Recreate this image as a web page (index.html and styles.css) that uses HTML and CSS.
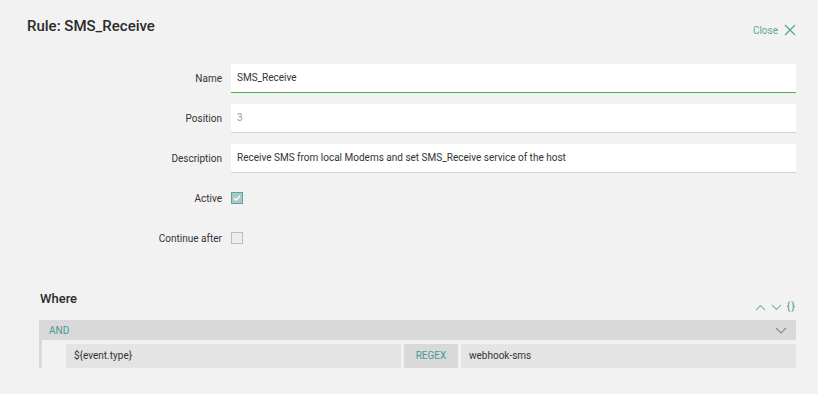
FILE: index.html
```html
<!DOCTYPE html>
<html lang="en">
<head>
  <meta charset="UTF-8" />
  <title>Rule: SMS_Receive</title>
  <link rel="stylesheet" href="styles.css">
</head>
<body>
  <main class="panel">
    <header class="panel-head">
      <h1>Rule: SMS_Receive</h1>
      <a class="close-link" href="#">Close
        <svg width="12" height="12" viewBox="0 0 12 12"><path d="M1 1 L11 11 M11 1 L1 11" stroke="currentColor" stroke-width="1.3" fill="none"/></svg>
      </a>
    </header>

    <section class="form">
      <div class="row">
        <label>Name</label>
        <div class="field active-field">SMS_Receive</div>
      </div>
      <div class="row">
        <label>Position</label>
        <div class="field muted">3</div>
      </div>
      <div class="row">
        <label>Description</label>
        <div class="field">Receive SMS from local Modems and set SMS_Receive service of the host</div>
      </div>
      <div class="row">
        <label>Active</label>
        <span class="check checked">
          <svg width="8" height="6" viewBox="0 0 8 6"><path d="M1 3.2 L3 5 L7 1" stroke="#fff" stroke-width="1.4" fill="none"/></svg>
        </span>
      </div>
      <div class="row">
        <label>Continue after</label>
        <span class="check"></span>
      </div>
    </section>

    <section class="where">
      <div class="where-head">
        <h2>Where</h2>
        <div class="tools">
          <svg width="11" height="7" viewBox="0 0 11 7"><path d="M1 6 L5.5 1.5 L10 6" stroke="currentColor" stroke-width="1.1" fill="none"/></svg>
          <svg width="11" height="7" viewBox="0 0 11 7"><path d="M1 1 L5.5 5.5 L10 1" stroke="currentColor" stroke-width="1.1" fill="none"/></svg>
          <span class="braces">{}</span>
        </div>
      </div>

      <div class="group-bar">
        <span class="op">AND</span>
        <svg width="12" height="7" viewBox="0 0 12 7"><path d="M1 1 L6 6 L11 1" stroke="#8a8a8a" stroke-width="1.1" fill="none"/></svg>
      </div>
      <div class="group-body">
        <div class="cond">
          <div class="cond-field">${event.type}</div>
          <div class="cond-op">REGEX</div>
          <div class="cond-value">webhook-sms</div>
        </div>
      </div>
    </section>
  </main>
</body>
</html>
```

FILE: styles.css
```css
:root {
  --fondo: #f2f2f2;
  --texto: #333;
  --teal: #4a9a94;
  --gris-barra: #d9d9d9;
  --gris-celda: #e4e4e4;
}

* {
  box-sizing: border-box;
}

body {
  margin: 0;
  background: var(--fondo);
  color: var(--texto);
  font-family: Roboto, "Liberation Sans", sans-serif;
}

.panel {
  padding: 16px 22px 0 27px;
}

.panel-head {
  display: flex;
  justify-content: space-between;
  align-items: center;
  height: 20px;
}

.panel-head h1 {
  margin: 0;
  font-size: 15px;
  font-weight: 500;
  color: #2b2b2b;
}

.close-link {
  display: flex;
  align-items: center;
  gap: 6px;
  color: #5fa39e;
  font-size: 10px;
  text-decoration: none;
  margin-top: 8px;
}

.form {
  margin-top: 28px;
}

.row {
  display: flex;
  align-items: center;
  height: 29px;
  margin-bottom: 11px;
}

.row label {
  width: 204px;
  padding-right: 9px;
  text-align: right;
  font-size: 10px;
  color: var(--texto);
}

.field {
  flex: 1;
  height: 29px;
  background: #fff;
  border-bottom: 1px solid #cfd4d8;
  padding: 0 6px;
  font-size: 10px;
  line-height: 28px;
  color: #333;
}

.active-field {
  border-bottom-color: #4cb050;
}

.muted {
  color: #9a9a9a;
}

.check {
  width: 12px;
  height: 12px;
  border: 1px solid #b9bec2;
  background: #eeeeee;
  display: flex;
  align-items: center;
  justify-content: center;
  margin-top: -2px;
}

.check.checked {
  border-color: #5fa39e;
  background: #a9cac7;
}

.where {
  margin-top: 35px;
  padding-left: 12px;
}

.where-head {
  display: flex;
  justify-content: space-between;
  align-items: flex-end;
  height: 26px;
}

.where-head h2 {
  margin: 0 0 8px 1px;
  font-size: 13px;
  font-weight: 500;
  color: #2b2b2b;
}

.tools {
  display: flex;
  align-items: center;
  gap: 5px;
  color: #7fb8b3;
  height: 14px;
}

.braces {
  font-size: 11px;
  color: var(--teal);
  letter-spacing: 1px;
  line-height: 12px;
}

.group-bar {
  margin-top: 6px;
  height: 20px;
  background: var(--gris-barra);
  display: flex;
  justify-content: space-between;
  align-items: center;
  padding: 0 9px 0 10px;
}

.op {
  color: var(--teal);
  font-size: 10px;
}

.group-body {
  border-left: 3px solid var(--gris-barra);
  padding: 4px 0 0 24px;
  height: 28px;
}

.cond {
  display: flex;
  gap: 3px;
  height: 24px;
  font-size: 10px;
}

.cond > div {
  line-height: 24px;
  padding: 0 8px;
}

.cond-field {
  width: 335px;
  background: var(--gris-celda);
}

.cond-op {
  width: 54px;
  background: var(--gris-barra);
  color: var(--teal);
  text-align: center;
}

.cond-value {
  flex: 1;
  background: var(--gris-celda);
}
```
